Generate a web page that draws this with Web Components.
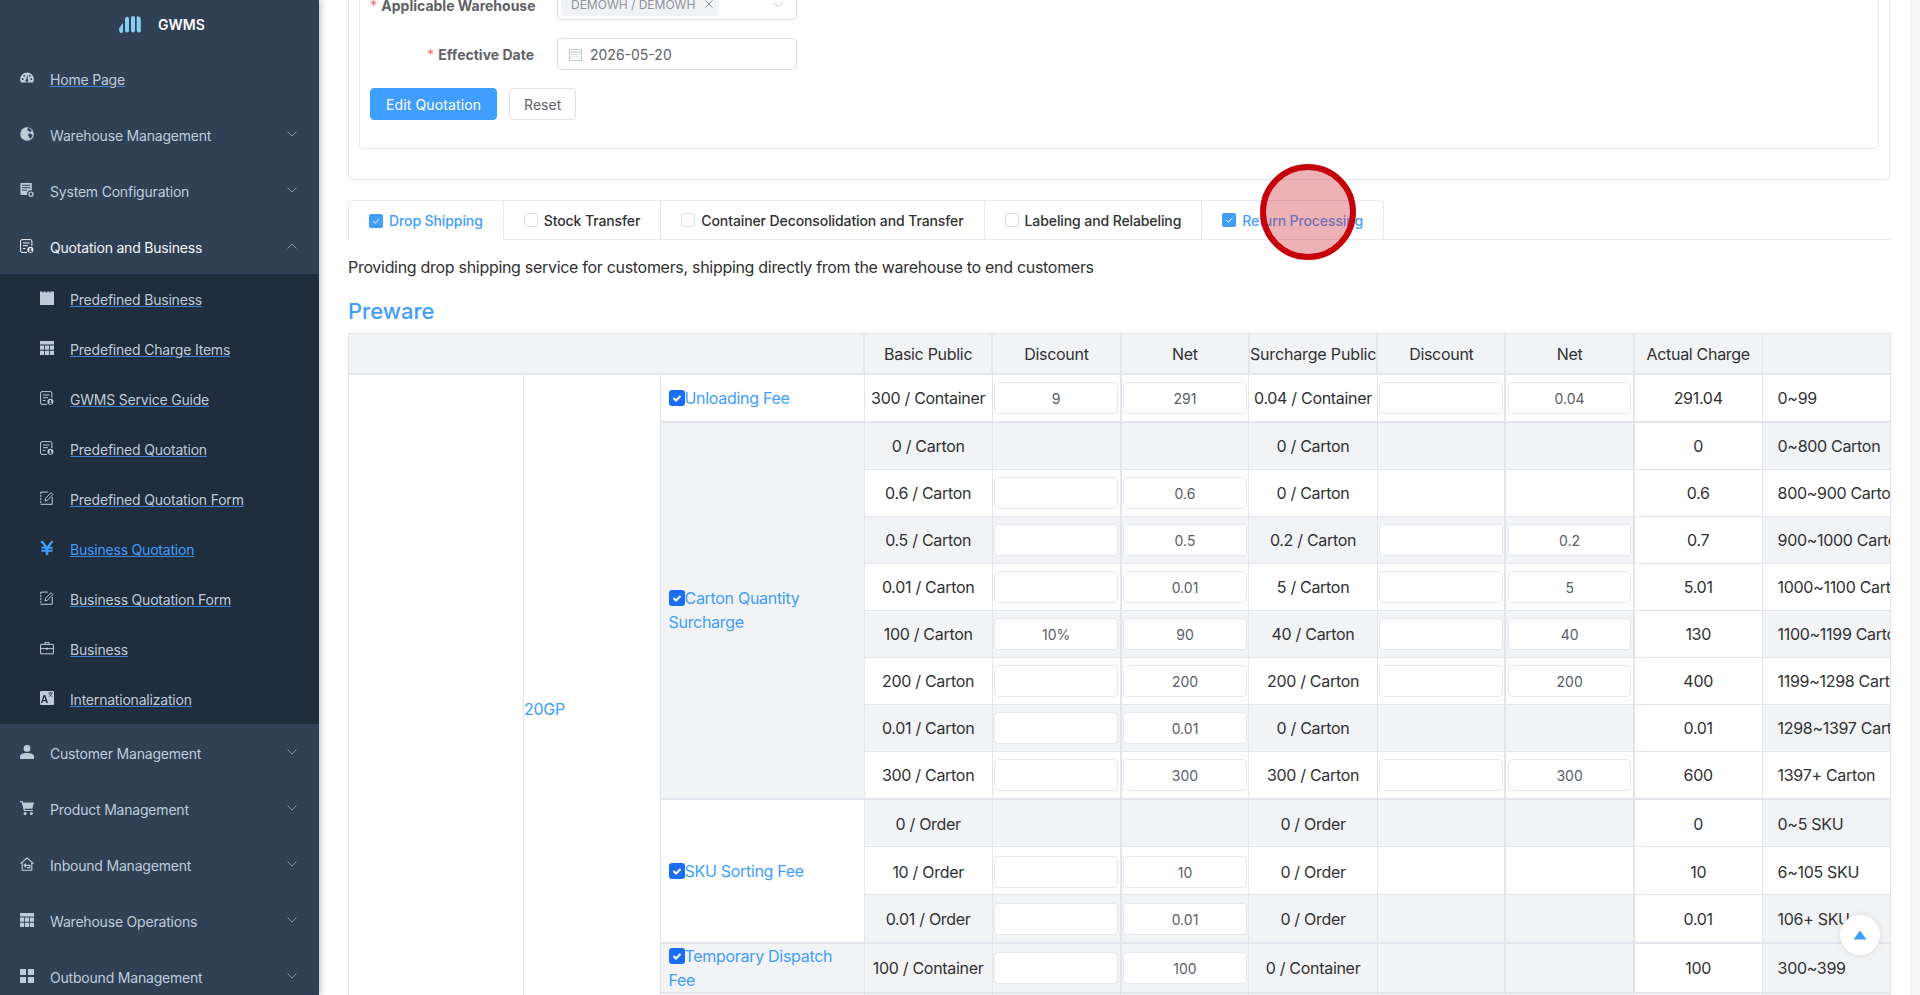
<!DOCTYPE html>
<html lang="en">
<head>
<meta charset="utf-8">
<title>GWMS</title>
<style>
  html, body { margin: 0; height: 100%; overflow: hidden; background: #fff; font-family: Inter, "Liberation Sans", sans-serif; }
</style>
</head>
<body>
<gw-app>
  <gw-sidebar slot="side"></gw-sidebar>
  <gw-form-card></gw-form-card>
  <gw-tabs></gw-tabs>
  <gw-fee-table></gw-fee-table>
</gw-app>
<gw-back-top></gw-back-top>
<gw-click-marker></gw-click-marker>

<script>
const svg = (body, size = 14, extra = '') => `<svg width="${size}" height="${size}" viewBox="0 0 14 14" ${extra}>${body}</svg>`

const ICONS = {
	gauge: `<path fill="currentColor" d="M7 1.500A6.800 6.800 0 0 0 .2 8.300c0 1.300.3 2.300.9 3.200h11.800c.6-.9.9-1.900.9-3.200A6.800 6.800 0 0 0 7 1.500z"/><g fill="#304156"><circle cx="2.700" cy="8" r=".9"/><circle cx="4.200" cy="4.800" r=".9"/><circle cx="11.300" cy="8" r=".9"/><circle cx="9.800" cy="4.800" r=".9"/><path d="M7.700 3 6.300 8.200a1.400 1.400 0 1 0 1.500.2z"/></g>`,
	globe: `<circle cx="7" cy="7" r="6.800" fill="currentColor"/><path fill="#304156" d="M7.600 1c1.800.2 3.200 1 4.200 2.400l-.5 1.200-1.600.4-.8-1-1.500-.4zM8.500 6.500l2.400.3 1.600 1.300c-.3 1.600-1.200 2.800-2.600 3.800l-.8-2.100-1-1.200z"/>`,
	server: `<path fill="currentColor" d="M.5 0h11.300v7.400a3.600 3.600 0 0 0-4.600 4.600H.5z"/><g fill="#304156"><rect x="2" y="1.800" width="8.300" height="1"/><rect x="2" y="4.200" width="8.300" height="1"/><rect x="2" y="6.600" width="5" height="1"/></g><circle cx="11" cy="11.200" r="2" fill="none" stroke="currentColor" stroke-width="1.300"/>`,
	doc: `<path fill="none" stroke="currentColor" stroke-width="1" d="M7 13.400H2A1.500 1.500 0 0 1 .6 12V2A1.500 1.500 0 0 1 2 .6h8.400A1.500 1.500 0 0 1 11.900 2v5"/><path fill="none" stroke="currentColor" stroke-width="1" d="M3 4h6.500M3 6.700h5M3 9.500h2.500"/><circle cx="10.400" cy="10.800" r="3" fill="currentColor"/><circle cx="10.400" cy="9.900" r="1" fill="#1f2d3d"/><path fill="#1f2d3d" d="M8.700 12.700c.3-1 1-1.400 1.700-1.400s1.400.4 1.700 1.400z"/>`,
	calendar: `<path fill="currentColor" d="M0 .4h2.500v1.200h1V.4h2.500v1.200h1.100V.4h2.400v1.200h1V.4H14V14H0z"/>`,
	table: `<path fill="currentColor" d="M0 0h14v3.600H0zM0 4.500h4.200v4.300H0zM5 4.500h4v4.300H5zM9.800 4.500H14v4.300H9.800zM0 9.700h4.200V14H0zM5 9.700h4V14H5zM9.800 9.700H14V14H9.800z"/>`,
	edit: `<path fill="none" stroke="currentColor" stroke-width="1" stroke-dasharray="2.200 .8" d="M.8 1v12.400"/><path fill="none" stroke="currentColor" stroke-width="1" d="M.8 1.100h7M.8 13.300h11.400V6"/><path fill="none" stroke="currentColor" stroke-width="1" d="M5 9.800l.5-2.400L11 1.700l1.900 1.900-5.600 5.700z"/>`,
	yen: `<path fill="currentColor" d="M.2 0h2.800L7 5.600 11 0h2.800L9.600 5.700h3v2H8.300v1h4.300v2H8.300V14H5.700v-3.300H1.400v-2h4.300v-1H1.400v-2h3z"/>`,
	briefcase: `<path fill="none" stroke="currentColor" stroke-width="1" d="M.6 3.400h12.800v9.400H.6zM.6 7.600h12.800M4.800 3.400V1.600h4.400v1.800"/><rect x="6" y="6.800" width="2" height="1.800" fill="currentColor"/>`,
	translate: `<rect width="14" height="14" rx="1" fill="currentColor"/><path fill="#1f2d3d" d="M3.700 4 .8 12h1.500l.6-1.800h2.900l.6 1.800H8L5.200 4zm.7 1.800 1 3.100H3.300z"/><path fill="none" stroke="#1f2d3d" stroke-width=".7" d="M8.500 2h4.300M10.600 1v1M9.200 2.200c.4 1.500 1.500 2.700 3.400 3.300M12 2.200c-.4 1.500-1.500 2.700-3.200 3.300"/>`,
	user: `<circle cx="7" cy="3.400" r="3.400" fill="currentColor"/><path fill="currentColor" d="M0 14v-2.300C0 9.300 3 8 7 8s7 1.300 7 3.700V14z"/>`,
	cart: `<path fill="currentColor" d="M0 0h2.500l.5 1.600h11l-1.700 6.200H4.700l.3 1.100h8v1.200H3.900L1.700 1.200H0z"/><circle cx="5.100" cy="12.500" r="1.500" fill="currentColor"/><circle cx="11.400" cy="12.500" r="1.500" fill="currentColor"/>`,
	homein: `<path fill="none" stroke="currentColor" stroke-width="1.100" stroke-linejoin="round" d="M.5 6.700 7 1l6.500 5.700M2.200 5.600v7.600h9.600V5.600"/><path fill="none" stroke="currentColor" stroke-width="1.100" d="M3.800 8.400h6.200M6 6.400l-2 2 2 2M9.900 8v2.600H7"/>`,
	grid: `<path fill="currentColor" d="M0 0h6v6H0zM8 0h6v6H8zM0 8h6v6H0zM8 8h6v6H8z"/>`,
}

const chevron = (up) => `<svg width="10" height="6" viewBox="0 0 10 6"><path fill="none" stroke="currentColor" stroke-width=".9" d="${up ? 'M.6 5.400 5 1l4.400 4.400' : 'M.6.6 5 5 9.400.6'}"/></svg>`

class GwApp extends HTMLElement {
	connectedCallback() {
		const shadow = this.attachShadow({ mode: 'open' })
		shadow.innerHTML = `
      <slot name="side"></slot>
      <div class="main"><div class="inner"><slot></slot></div></div>
      <div class="track"></div>
      <style>
        :host { display: flex; height: 100vh; overflow: hidden; }
        .main { flex: 1; min-width: 0; overflow: hidden; padding: 0 21px 0 29px; }
        .inner { margin-top: -42px; display: flex; flex-direction: column; }
        .track { flex: none; width: 8px; background: #f7f7f9; border-left: 1px solid #e9eaee; }
      </style>
    `
	}
}

class GwNavItem extends HTMLElement {
	connectedCallback() {
		const shadow = this.attachShadow({ mode: 'open' })
		const sub = this.hasAttribute('sub')
		const link = this.hasAttribute('link')
		const arrow = this.getAttribute('arrow')
		shadow.innerHTML = `
      <span class="ic">${svg(ICONS[this.getAttribute('icon')])}</span>
      <span class="tx ${link ? 'link' : ''}"><slot></slot></span>
      ${arrow ? `<span class="ar">${chevron(arrow === 'up')}</span>` : ''}
      <style>
        :host {
          display: flex;
          align-items: center;
          box-sizing: border-box;
          height: ${sub ? 50 : 56}px;
          padding-left: ${sub ? 40 : 20}px;
          padding-top: ${sub ? 0 : 2}px;
          font-size: 14px;
          letter-spacing: -.2px;
          color: #bfcbd9;
          background: ${sub ? '#1f2d3d' : 'transparent'};
          white-space: nowrap;
          position: relative;
        }
        :host([open]) { color: #f4f4f5; }
        :host([active]) { color: #409eff; }
        .ic { display: flex; width: 14px; margin-right: 16px; margin-top: -2px; }
        .tx.link { text-decoration: underline; text-decoration-color: #3d85d8; text-underline-offset: 1px; text-decoration-thickness: 1px; }
        .ar { margin-left: auto; margin-right: 22px; display: flex; color: #909aa8; margin-top: -3px; }
      </style>
    `
	}
}

class GwSidebar extends HTMLElement {
	connectedCallback() {
		const shadow = this.attachShadow({ mode: 'open' })
		const top = (icon, text, attrs = 'arrow="down"') => `<gw-nav-item icon="${icon}" ${attrs}>${text}</gw-nav-item>`
		const sub = (icon, text, attrs = '') => `<gw-nav-item sub link icon="${icon}" ${attrs}>${text}</gw-nav-item>`
		shadow.innerHTML = `
      <div class="logo">
        <svg width="22" height="17" viewBox="0 0 22 17"><g fill="#86cff3"><path d="M0 12.500 3.400 7.500h.6v7.500a1.800 1.800 0 0 1-3.600.4z"/><path d="M6 3.200C6 1.800 6.700.8 8 .8s2 1 2 2.400V14c0 1.500-.7 2.500-2 2.500s-2-1-2-2.500z"/><path d="M12 1.500c0-.8.700-1.200 2-1.200s2 .4 2 1.500V14c0 1.500-.7 2.500-2 2.500s-2-1-2-2.500z"/><path d="M17.700 .6h2c1.200 0 2.100 1.200 2.100 2.800V15c0 1-.7 1.600-2 1.500-1.400-.1-2-1-2.100-2.500z"/></g></svg>
        <span>GWMS</span>
      </div>
      ${top('gauge', 'Home Page', 'link')}
      ${top('globe', 'Warehouse Management')}
      ${top('server', 'System Configuration')}
      ${top('doc', 'Quotation and Business', 'open arrow="up"')}
      ${sub('calendar', 'Predefined Business')}
      ${sub('table', 'Predefined Charge Items')}
      ${sub('doc', 'GWMS Service Guide')}
      ${sub('doc', 'Predefined Quotation')}
      ${sub('edit', 'Predefined Quotation Form')}
      ${sub('yen', 'Business Quotation', 'active')}
      ${sub('edit', 'Business Quotation Form')}
      ${sub('briefcase', 'Business')}
      ${sub('translate', 'Internationalization')}
      ${top('user', 'Customer Management')}
      ${top('cart', 'Product Management')}
      ${top('homein', 'Inbound Management')}
      ${top('table', 'Warehouse Operations')}
      ${top('grid', 'Outbound Management')}
      <style>
        :host {
          display: block;
          flex: none;
          width: 319px;
          height: 100vh;
          overflow: hidden;
          background: #304156;
          box-shadow: 2px 0 6px rgba(0, 21, 41, .25);
          position: relative;
          z-index: 2;
        }
        .logo { height: 50px; display: flex; align-items: center; justify-content: center; gap: 17px; color: #fff; font-size: 14px; font-weight: 600; padding-left: 5px; box-sizing: border-box; margin-top: -1px; margin-bottom: 1px; }
      </style>
    `
	}
}

class GwFormCard extends HTMLElement {
	connectedCallback() {
		const shadow = this.attachShadow({ mode: 'open' })
		shadow.innerHTML = `
      <div class="inner">
        <div class="row">
          <label class="low"><i>*</i> Applicable Warehouse</label>
          <div class="field select">
            <span class="tag">DEMOWH / DEMOWH <svg width="8" height="8" viewBox="0 0 8 8"><path stroke="#909399" fill="none" d="M.5.500l7 7M7.500.500l-7 7"/></svg></span>
            <span class="arrow">${chevron(false)}</span>
          </div>
        </div>
        <div class="row">
          <label><i>*</i> Effective Date</label>
          <div class="field date">
            <svg width="13" height="13" viewBox="0 0 13 13"><path fill="none" stroke="#c0c4cc" d="M.5 1.500h12v11H.5zM.5 4h12"/><path stroke="#c0c4cc" stroke-dasharray="1 1" d="M2.500 6.500h8M2.500 9h8"/></svg>
            <span>2026-05-20</span>
          </div>
        </div>
        <div class="btns">
          <button class="primary">Edit Quotation</button>
          <button>Reset</button>
        </div>
      </div>
      <style>
        :host {
          display: block;
          border: 1px solid #e4e7ed;
          border-radius: 4px;
          padding: 10px 10px 30px;
          margin-bottom: 20px;
          color: #606266;
          font-size: 14px;
        }
        .inner { border: 1px solid #e4e7ed; border-radius: 4px; padding: 18px 10px 28px; }
        .row { display: flex; align-items: center; margin-bottom: 18px; }
        label { width: 164px; margin-right: 23px; text-align: right; font-weight: 700; white-space: nowrap; flex: none; }
        label.low { margin-top: 2px; }
        i { color: #f56c6c; font-style: normal; font-weight: 400; margin-right: 1px; }
        .field { width: 240px; height: 32px; box-sizing: border-box; border: 1px solid #dcdfe6; border-radius: 4px; display: flex; align-items: center; background: #fff; }
        .select { padding-left: 3px; position: relative; }
        .tag { height: 24px; width: 158px; box-sizing: border-box; padding-left: 10px; background: #f0f2f5; border-radius: 4px; color: #909399; font-size: 12px; display: flex; align-items: center; gap: 10px; white-space: nowrap; }
        .arrow { position: absolute; right: 13px; top: 13px; display: flex; color: #c0c4cc; }
        .date { padding-left: 11px; gap: 8px; }
        .btns { display: flex; gap: 12px; }
        button { font: inherit; height: 32px; padding: 0 14px; border: 1px solid #dcdfe6; border-radius: 4px; background: #fff; color: #606266; }
        button.primary { background: #409eff; border-color: #409eff; color: #fff; padding: 0 15px; letter-spacing: .12px; }
      </style>
    `
	}
}

class GwTabs extends HTMLElement {
	connectedCallback() {
		const shadow = this.attachShadow({ mode: 'open' })
		const tab = (label, on, first) => `
      <div class="tab ${first ? 'first' : ''} ${on ? 'on' : ''}">
        <span class="cb">${on ? '<svg width="14" height="14" viewBox="0 0 14 14"><path fill="none" stroke="#fff" d="M4 7l2.200 2.200L10.500 5"/></svg>' : ''}</span>${label}
      </div>`
		shadow.innerHTML = `
      <div class="bar">
        <div class="list">
          ${tab('Drop Shipping', true, true)}
          ${tab('Stock Transfer')}
          ${tab('Container Deconsolidation and Transfer')}
          ${tab('Labeling and Relabeling')}
          ${tab('Return Processing', true)}
        </div>
      </div>
      <p>Providing drop shipping service for customers, shipping directly from the warehouse to end customers</p>
      <h2>Preware</h2>
      <style>
        :host { display: block; }
        .bar { border-bottom: 1px solid #e4e7ed; height: 39px; }
        .list { display: inline-flex; height: 39px; border: 1px solid #e4e7ed; border-bottom: 0; border-radius: 4px 4px 0 0; box-sizing: border-box; }
        .tab { display: flex; align-items: center; padding: 0 20px; font-size: 14px; font-weight: 500; letter-spacing: -.1px; color: #303133; border-left: 1px solid #e4e7ed; white-space: nowrap; height: 38px; }
        .tab.first { border-left: 0; background: #fff; height: 39px; position: relative; }
        .cb { width: 14px; height: 14px; box-sizing: border-box; border: 1px solid #dcdfe6; border-radius: 2px; margin-right: 6px; display: block; }
        .cb svg { display: block; margin: -1px; }
        .tab.on { color: #409eff; }
        .tab.on .cb { background: #409eff; border-color: #409eff; }
        p { margin: 16px 0 0; font-size: 16px; line-height: 22px; letter-spacing: -.3px; color: #303133; }
        h2 { margin: 17px 0 0; font-size: 22px; line-height: 32px; font-weight: 500; color: #409eff; }
      </style>
    `
	}
}

class GwFeeTable extends HTMLElement {
	connectedCallback() {
		const shadow = this.attachShadow({ mode: 'open' })
		// value '' is an empty input, null is a blank cell, anything else is a filled input
		const groups = [
			{ name: 'Unloading Fee', gray: false, start: false, h: 47.500, rows: [
				['300 / Container', '9', '291', '0.04 / Container', '', '0.04', '291.04', '0~99'],
			] },
			{ name: 'Carton Quantity Surcharge', gray: true, start: true, h: 47, firstExtra: 1, rows: [
				['0 / Carton', null, null, '0 / Carton', null, null, '0', '0~800 Carton'],
				['0.6 / Carton', '', '0.6', '0 / Carton', null, null, '0.6', '800~900 Carton'],
				['0.5 / Carton', '', '0.5', '0.2 / Carton', '', '0.2', '0.7', '900~1000 Carton'],
				['0.01 / Carton', '', '0.01', '5 / Carton', '', '5', '5.01', '1000~1100 Carton'],
				['100 / Carton', '10%', '90', '40 / Carton', '', '40', '130', '1100~1199 Carton'],
				['200 / Carton', '', '200', '200 / Carton', '', '200', '400', '1199~1298 Carton'],
				['0.01 / Carton', '', '0.01', '0 / Carton', null, null, '0.01', '1298~1397 Carton'],
				['300 / Carton', '', '300', '300 / Carton', '', '300', '600', '1397+ Carton'],
			] },
			{ name: 'SKU Sorting Fee', gray: false, start: true, h: 48, low: true, rows: [
				['0 / Order', null, null, '0 / Order', null, null, '0', '0~5 SKU'],
				['10 / Order', '', '10', '0 / Order', null, null, '10', '6~105 SKU'],
				['0.01 / Order', '', '0.01', '0 / Order', null, null, '0.01', '106+ SKU'],
			] },
			{ name: 'Temporary Dispatch Fee', gray: true, start: true, h: 48, rows: [
				['100 / Container', '', '100', '0 / Container', null, null, '100', '300~399'],
			] },
		]
		const total = groups.reduce((n, g) => n + g.rows.length, 0) + 1

		const input = (v) => v === null ? '' : `<div class="in">${v}</div>`
		let body = ''
		let first = true
		groups.forEach((g) => {
			// stripes restart at each group: the first price row of a group is gray, except for the single Unloading row
			let gray = g.name !== 'Unloading Fee'
			g.rows.forEach((r, i) => {
				const h = g.h + (i === 0 && g.firstExtra ? g.firstExtra : 0)
				body += `<tr class="${gray ? 'g' : ''} ${g.start && i === 0 ? 'start' : ''} ${g.low ? 'low' : ''}" style="height:${h}px">`
				if (first) {
					body += `<td rowspan="${total}" class="blank"></td><td rowspan="${total}" class="blank name">20GP</td>`
					first = false
				}
				if (i === 0) {
					body += `<td rowspan="${g.rows.length}" class="fee ${g.gray ? 'gr' : 'wh'}"><span class="ck"><svg width="16" height="16" viewBox="0 0 16 16"><path fill="none" stroke="#fff" stroke-width="2" d="M4.500 8l2.500 2.500 4.500-4.500"/></svg></span>${g.name}</td>`
				}
				body += `<td>${r[0]}</td><td>${input(r[1])}</td><td class="thick">${input(r[2])}</td><td>${r[3]}</td><td>${input(r[4])}</td><td class="thick">${input(r[5])}</td><td class="act thick">${r[6]}</td><td class="last">${r[7]}</td></tr>`
				gray = !gray
			})
		})
		shadow.innerHTML = `
      <table>
        <colgroup>
          <col style="width:175px"><col style="width:137px"><col style="width:203.500px">
          <col span="8" style="width:128.300px">
        </colgroup>
        <thead><tr>
          <th colspan="3"></th><th class="thick">Basic Public</th><th class="thick">Discount</th><th class="thick">Net</th><th class="thick tight">Surcharge Public</th><th class="thick">Discount</th><th class="thick">Net</th><th class="thick">Actual Charge</th><th></th>
        </tr></thead>
        <tbody>
          ${body}
          <tr class="g start" style="height:51px"><td class="wh"></td><td></td><td></td><td></td><td></td><td></td><td></td><td class="act"></td><td class="last"></td></tr>
        </tbody>
      </table>
      <style>
        :host { display: block; margin-top: 6px; }
        table { table-layout: fixed; width: 100%; border-collapse: collapse; font-size: 16px; letter-spacing: -.3px; color: #303133; }
        th, td { border: 1px solid #e2e5ec; padding: 0; text-align: center; font-weight: 400; overflow: hidden; white-space: nowrap; }
        th { background: #f2f3f5; height: 39px; border-bottom-width: 2px; }
        th.tight { letter-spacing: -.15px; }
        .thick { border-left-width: 2px; }
        tr.start td { border-top-width: 2px; }
        tr.low td:not(.fee) { padding-top: 2px; }
        tr.g td { background: #f2f3f5; }
        tr td.blank, tr td.wh { background: #fff; }
        tr td.gr { background: #f2f3f5; }
        tr td.act { background: #fff; }
        td.name { text-align: left; color: #409eff; }
        td.fee { text-align: left; white-space: normal; padding: 0 7.500px; color: #409eff; line-height: 24px; }
        td.last { text-align: left; padding-left: 15px; }
        .ck { display: inline-block; width: 16px; height: 16px; background: #1a6ef5; border-radius: 3px; vertical-align: -2px; }
        .ck svg { display: block; }
        .in { height: 30px; margin: 0 1.500px; border: 1px solid #e6e8ee; border-radius: 4px; background: #fff; font-size: 14px; letter-spacing: 0; line-height: 32px; color: #5a5e66; text-align: center; }
      </style>
    `
	}
}

class GwBackTop extends HTMLElement {
	connectedCallback() {
		const shadow = this.attachShadow({ mode: 'open' })
		shadow.innerHTML = `
      <svg width="14" height="10" viewBox="0 0 14 10"><path fill="#409eff" d="M7 .5 13.500 9.500H.5z"/></svg>
      <style>
        :host {
          position: fixed;
          left: 1840px;
          top: 915px;
          width: 40px;
          height: 40px;
          border-radius: 50%;
          background: #fff;
          box-shadow: 0 0 6px rgba(0, 0, 0, .12);
          display: flex;
          align-items: center;
          justify-content: center;
          z-index: 5;
        }
      </style>
    `
	}
}

class GwClickMarker extends HTMLElement {
	connectedCallback() {
		const shadow = this.attachShadow({ mode: 'open' })
		shadow.innerHTML = `
      <style>
        :host {
          position: fixed;
          left: 1260px;
          top: 164px;
          width: 96px;
          height: 96px;
          box-sizing: border-box;
          border: 6px solid #c5000b;
          border-radius: 50%;
          background: rgba(205, 30, 40, .34);
          z-index: 6;
        }
      </style>
    `
	}
}

customElements.define('gw-app', GwApp)
customElements.define('gw-nav-item', GwNavItem)
customElements.define('gw-sidebar', GwSidebar)
customElements.define('gw-form-card', GwFormCard)
customElements.define('gw-tabs', GwTabs)
customElements.define('gw-fee-table', GwFeeTable)
customElements.define('gw-back-top', GwBackTop)
customElements.define('gw-click-marker', GwClickMarker)
</script>
</body>
</html>
